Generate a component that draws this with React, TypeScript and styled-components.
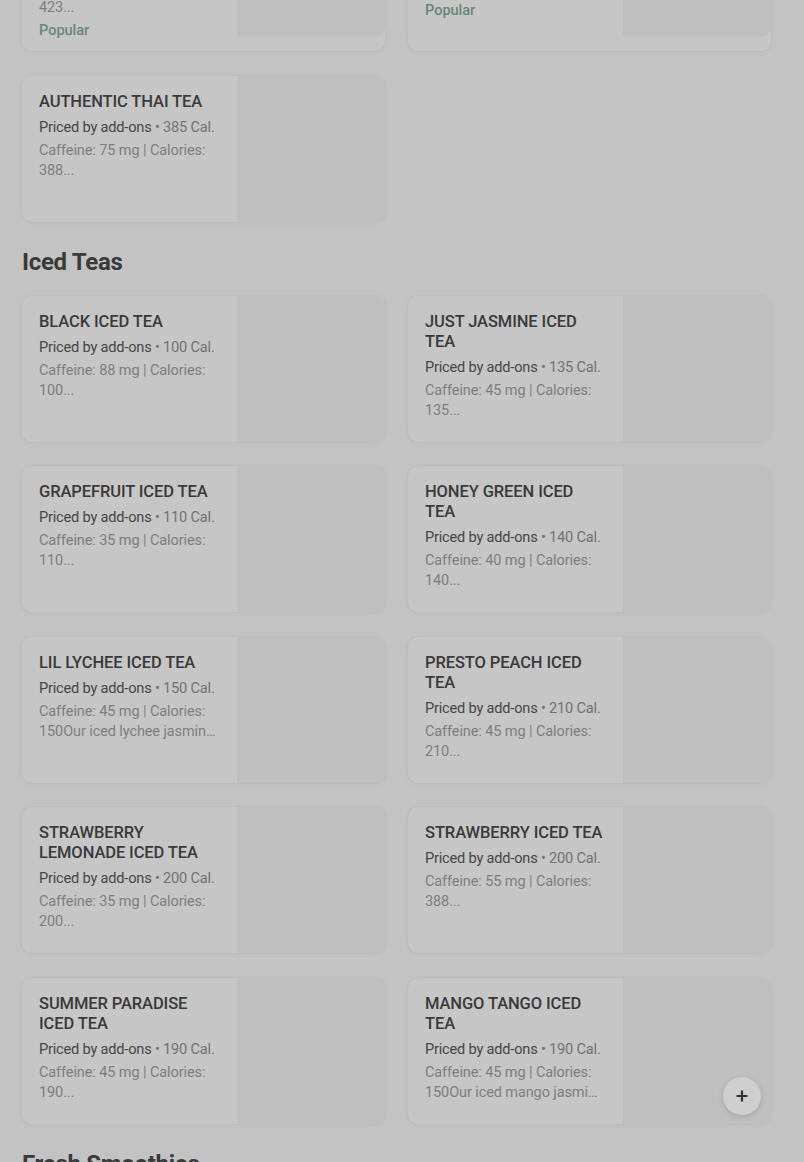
import styled, { createGlobalStyle } from "styled-components";

type Item = {
    name: string;
    cal: number;
    desc: string;
    popular?: boolean;
};

const topItems: Item[] = [
    { name: "BROWN SUGAR BOBA MILK TEA", cal: 420, desc: "Caffeine: 95 mg | Calories: 423...", popular: true },
    { name: "CLASSIC MILK TEA", cal: 390, desc: "Caffeine: 95 mg | Calories: 390...", popular: true },
    { name: "AUTHENTIC THAI TEA", cal: 385, desc: "Caffeine: 75 mg | Calories: 388..." },
];

const icedTeas: Item[] = [
    { name: "BLACK ICED TEA", cal: 100, desc: "Caffeine: 88 mg | Calories: 100..." },
    { name: "JUST JASMINE ICED TEA", cal: 135, desc: "Caffeine: 45 mg | Calories: 135..." },
    { name: "GRAPEFRUIT ICED TEA", cal: 110, desc: "Caffeine: 35 mg | Calories: 110..." },
    { name: "HONEY GREEN ICED TEA", cal: 140, desc: "Caffeine: 40 mg | Calories: 140..." },
    { name: "LIL LYCHEE ICED TEA", cal: 150, desc: "Caffeine: 45 mg | Calories: 150Our iced lychee jasmine tea is light and floral..." },
    { name: "PRESTO PEACH ICED TEA", cal: 210, desc: "Caffeine: 45 mg | Calories: 210..." },
    { name: "STRAWBERRY LEMONADE ICED TEA", cal: 200, desc: "Caffeine: 35 mg | Calories: 200..." },
    { name: "STRAWBERRY ICED TEA", cal: 200, desc: "Caffeine: 55 mg | Calories: 388..." },
    { name: "SUMMER PARADISE ICED TEA", cal: 190, desc: "Caffeine: 45 mg | Calories: 190..." },
    { name: "MANGO TANGO ICED TEA", cal: 190, desc: "Caffeine: 45 mg | Calories: 150Our iced mango jasmine tea is sweet and tropical..." },
];

const MenuCard = ({ item, withAdd }: { item: Item; withAdd?: boolean }) => {
    return (
        <Card>
            <Info>
                <Title>{item.name}</Title>
                <Price>
                    Priced by add-ons <Cal>• {item.cal} Cal.</Cal>
                </Price>
                <Desc>{item.desc}</Desc>
                {item.popular && <Popular>Popular</Popular>}
            </Info>
            <Thumb $short={item.popular}>
                {withAdd && (
                    <AddButton>
                        <svg width="14" height="14" viewBox="0 0 14 14">
                            <path d="M7 1.5v11M1.5 7h11" stroke="#2f2f2f" strokeWidth="2.2" />
                        </svg>
                    </AddButton>
                )}
            </Thumb>
        </Card>
    );
};

export default function App() {
    return (
        <>
            <GlobalStyle />
            <Page>
                <Grid $scrolled>
                    {topItems.map((item) => (
                        <MenuCard key={item.name} item={item} />
                    ))}
                </Grid>
                <SectionTitle>Iced Teas</SectionTitle>
                <Grid>
                    {icedTeas.map((item, i) => (
                        <MenuCard key={item.name} item={item} withAdd={i === icedTeas.length - 1} />
                    ))}
                </Grid>
                <SectionTitle>Fresh Smoothies</SectionTitle>
            </Page>
        </>
    );
}

const GlobalStyle = createGlobalStyle`
    html, body {
        margin: 0;
        background: #c3c3c3;
        overflow: hidden;
        height: 1162px;
    }
    body {
        font-family: Roboto, "Liberation Sans", Arial, sans-serif;
        -webkit-font-smoothing: antialiased;
    }
`;

const Page = styled.main`
    width: 749px;
    padding: 0 0 0 22px;
`;

const Grid = styled.section<{ $scrolled?: boolean }>`
    display: grid;
    grid-template-columns: 363px 363px;
    column-gap: 23px;
    row-gap: 24.5px;
    margin-top: ${(p) => (p.$scrolled ? "-107px" : "0")};
`;

const SectionTitle = styled.h2`
    margin: 24px 0 18px;
    font-size: 24px;
    line-height: 32px;
    font-weight: 700;
    letter-spacing: -0.3px;
    color: #3a3a3a;
`;

const Card = styled.article`
    position: relative;
    display: flex;
    min-height: 146px;
    background: #c6c6c6;
    border-radius: 10px;
    box-shadow: 0 0 0 1px rgba(0, 0, 0, 0.015), 0 1px 6px rgba(0, 0, 0, 0.035);
    overflow: hidden;
`;

const Info = styled.div`
    flex: 1;
    display: flex;
    flex-direction: column;
    padding: 16px 18px 10px 17px;
    min-width: 0;
`;

const Title = styled.h3`
    margin: 0;
    font-size: 16.5px;
    line-height: 20px;
    font-weight: 500;
    color: #3a3a3a;
    letter-spacing: -0.1px;
`;

const Price = styled.div`
    margin-top: 5px;
    font-size: 14.6px;
    line-height: 20px;
    color: #474747;
    letter-spacing: -0.2px;
    white-space: nowrap;
`;

const Cal = styled.span`
    color: #727272;
`;

const Desc = styled.p`
    margin: 4px 0 0;
    font-size: 14.5px;
    line-height: 20px;
    color: #7e7e7e;
    letter-spacing: -0.1px;
    display: -webkit-box;
    -webkit-line-clamp: 2;
    -webkit-box-orient: vertical;
    overflow: hidden;
`;

const Popular = styled.span`
    margin-top: 3px;
    font-size: 14.5px;
    line-height: 20px;
    font-weight: 500;
    color: #6a8877;
`;

const Thumb = styled.div<{ $short?: boolean }>`
    position: relative;
    flex: 0 0 148px;
    align-self: ${(p) => (p.$short ? "flex-start" : "stretch")};
    height: ${(p) => (p.$short ? "144px" : "auto")};
    background: #bfbfbf;
    border-radius: 0 10px 10px 0;
`;

const AddButton = styled.button`
    position: absolute;
    right: 10px;
    bottom: 9px;
    width: 38px;
    height: 38px;
    border: none;
    border-radius: 50%;
    background: #cecece;
    box-shadow: 0 2px 6px rgba(0, 0, 0, 0.12);
    display: flex;
    align-items: center;
    justify-content: center;
    padding: 0;
`;
